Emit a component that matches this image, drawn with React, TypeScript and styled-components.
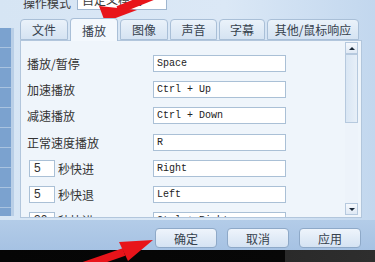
import React from "react";
import styled, { createGlobalStyle } from "styled-components";

const GlobalStyle = createGlobalStyle`
  html, body {
    margin: 0;
    padding: 0;
  }
  body {
    background: #cfe0f2;
    font-family: "Noto Sans CJK SC", "Noto Sans", sans-serif;
  }
`;

const Screen = styled.div`
  position: relative;
  width: 375px;
  height: 262px;
  overflow: hidden;
  display: flex;
  flex-direction: column;
  background: linear-gradient(90deg, #d6e5f4 0%, #dbe8f6 60%, #c2d7ee 100%);
`;

const TopRow = styled.div`
  height: 14px;
  display: flex;
  align-items: flex-end;
  padding-left: 23px;
  gap: 6px;
  overflow: hidden;
`;

const TopLabel = styled.span`
  font-size: 12px;
  line-height: 12px;
  color: #3a3a3a;
  margin-bottom: 5px;
`;

const Select = styled.div`
  width: 90px;
  height: 20px;
  margin-bottom: 4px;
  background: #fff;
  border: 1px solid #9fb6cf;
  box-sizing: border-box;
  font-size: 12px;
  line-height: 12px;
  color: #3a3a3a;
  padding: 3px 0 0 4px;
`;

const Body = styled.div`
  height: 206px;
  display: flex;
  padding-top: 4px;
  box-sizing: border-box;
`;

const SideList = styled.div`
  width: 11px;
  margin-top: 10px;
  margin-bottom: 4px;
  background: repeating-linear-gradient(
    180deg,
    #7ba2cf 0px,
    #7ba2cf 19px,
    #a9c3e0 19px,
    #a9c3e0 20px
  );
  border-right: 3px solid #b9cfe7;
`;

const Panel = styled.div`
  margin-left: 6px;
  width: 342px;
  display: flex;
  flex-direction: column;
`;

const Tabs = styled.div`
  height: 22px;
  display: flex;
  align-items: flex-end;
  gap: 2px;
`;

const Tab = styled.div<{ $active?: boolean; $w: number }>`
  width: ${(p) => p.$w}px;
  height: ${(p) => (p.$active ? 23 : 21)}px;
  box-sizing: border-box;
  border: 1px solid #a9bfd7;
  border-bottom: ${(p) => (p.$active ? "none" : "1px solid #a9bfd7")};
  border-radius: 4px 4px 0 0;
  background: ${(p) =>
    p.$active
      ? "#f3f8fd"
      : "linear-gradient(180deg, #eaf2fa 0%, #d5e3f2 100%)"};
  display: flex;
  align-items: center;
  justify-content: center;
  font-size: 12px;
  color: #36414d;
  margin-bottom: ${(p) => (p.$active ? "-1px" : "0")};
  position: relative;
  z-index: ${(p) => (p.$active ? 1 : 0)};
`;

const Content = styled.div`
  height: 178px;
  box-sizing: border-box;
  border: 1px solid #b2c6dc;
  background: #eff5fb;
  display: flex;
  overflow: hidden;
`;

const Rows = styled.div`
  flex: 1;
  padding: 9px 0 0 6px;
  display: flex;
  flex-direction: column;
`;

const Row = styled.div`
  height: 26.3px;
  flex-shrink: 0;
  display: flex;
  align-items: center;
`;

const LabelCell = styled.div`
  width: 126px;
  display: flex;
  align-items: center;
  font-size: 12px;
  color: #333;
`;

const NumBox = styled.div`
  width: 26px;
  height: 17px;
  margin-left: 2px;
  margin-right: 3px;
  box-sizing: border-box;
  border: 1px solid #aac0d6;
  background: #fff;
  font-family: "Liberation Sans", Arial, sans-serif;
  font-size: 12px;
  line-height: 15px;
  padding-left: 4px;
  color: #333;
`;

const KeyBox = styled.div`
  width: 133px;
  height: 17px;
  box-sizing: border-box;
  border: 1px solid #aac0d6;
  background: #fff;
  font-family: "Liberation Mono", "Courier New", monospace;
  font-size: 10px;
  line-height: 15px;
  padding-left: 3px;
  color: #222;
`;

const ScrollBar = styled.div`
  width: 13px;
  margin: 1px 3px 2px 0;
  display: flex;
  flex-direction: column;
  background: #edf3fa;
`;

const ScrollBtn = styled.div`
  height: 12px;
  box-sizing: border-box;
  border: 1px solid #b6c9de;
  background: linear-gradient(180deg, #f6f9fd, #dfe9f5);
  display: flex;
  align-items: center;
  justify-content: center;
`;

const Thumb = styled.div`
  height: 69px;
  box-sizing: border-box;
  border: 1px solid #b6c9de;
  background: linear-gradient(90deg, #d9e6f4, #e7eff8);
`;

const Track = styled.div`
  flex: 1;
`;

const Arrowhead = styled.div<{ $up?: boolean }>`
  width: 0;
  height: 0;
  border-left: 3px solid transparent;
  border-right: 3px solid transparent;
  ${(p) =>
    p.$up ? "border-bottom: 3px solid #1c2a3a;" : "border-top: 3px solid #1c2a3a;"}
`;

const ButtonBar = styled.div`
  height: 30px;
  box-sizing: border-box;
  display: flex;
  justify-content: flex-end;
  align-items: flex-start;
  gap: 10px;
  padding: 8px 14px 0 0;
  background: linear-gradient(180deg, #b3cce8 0%, #a6c2e3 100%);
`;

const Button = styled.div`
  width: 62px;
  height: 20px;
  box-sizing: border-box;
  border: 1px solid #8ea9c8;
  border-radius: 4px;
  background: linear-gradient(180deg, #eef4fb 0%, #d5e3f3 100%);
  display: flex;
  align-items: center;
  justify-content: center;
  font-size: 12px;
  color: #36414d;
`;

const BlackBand = styled.div`
  flex: 1;
  background: linear-gradient(90deg, #050505 0%, #070707 76%, #2a2a2a 76%, #2e2e2e 100%);
`;

const Overlay = styled.svg`
  position: absolute;
  left: 0;
  top: 0;
  pointer-events: none;
`;

const rows: { label: string; key: string; num?: string }[] = [
  { label: "播放/暂停", key: "Space" },
  { label: "加速播放", key: "Ctrl + Up" },
  { label: "减速播放", key: "Ctrl + Down" },
  { label: "正常速度播放", key: "R" },
  { label: "秒快进", key: "Right", num: "5" },
  { label: "秒快退", key: "Left", num: "5" },
  { label: "秒快进", key: "Ctrl + Right", num: "30" },
];

const tabs = [
  { t: "文件", w: 48 },
  { t: "播放", w: 48, active: true },
  { t: "图像", w: 48 },
  { t: "声音", w: 47 },
  { t: "字幕", w: 46 },
  { t: "其他/鼠标响应", w: 92 },
];

export default function App() {
  return (
    <Screen>
      <GlobalStyle />
      <TopRow>
        <TopLabel>操作模式</TopLabel>
        <Select>自定义模式</Select>
      </TopRow>
      <Body>
        <SideList />
        <Panel>
          <Tabs>
            {tabs.map((t) => (
              <Tab key={t.t} $w={t.w} $active={t.active}>
                {t.t}
              </Tab>
            ))}
          </Tabs>
          <Content>
            <Rows>
              {rows.map((r, i) => (
                <Row key={i}>
                  <LabelCell>
                    {r.num && <NumBox>{r.num}</NumBox>}
                    {r.label}
                  </LabelCell>
                  <KeyBox>{r.key}</KeyBox>
                </Row>
              ))}
            </Rows>
            <ScrollBar>
              <ScrollBtn>
                <Arrowhead $up />
              </ScrollBtn>
              <Thumb />
              <Track />
              <ScrollBtn>
                <Arrowhead />
              </ScrollBtn>
            </ScrollBar>
          </Content>
        </Panel>
      </Body>
      <ButtonBar>
        <Button>确定</Button>
        <Button>取消</Button>
        <Button>应用</Button>
      </ButtonBar>
      <BlackBand />
      <Overlay width="375" height="262" viewBox="0 0 375 262">
        <line x1="118" y1="10" x2="168" y2="-10" stroke="#e8141a" strokeWidth="8" />
        <polygon points="105,22 99,6 137,10" fill="#e8141a" />
        <line x1="124" y1="252" x2="66" y2="272" stroke="#e8141a" strokeWidth="8" />
        <polygon points="153,240 119,242 128,261" fill="#e8141a" />
      </Overlay>
    </Screen>
  );
}
